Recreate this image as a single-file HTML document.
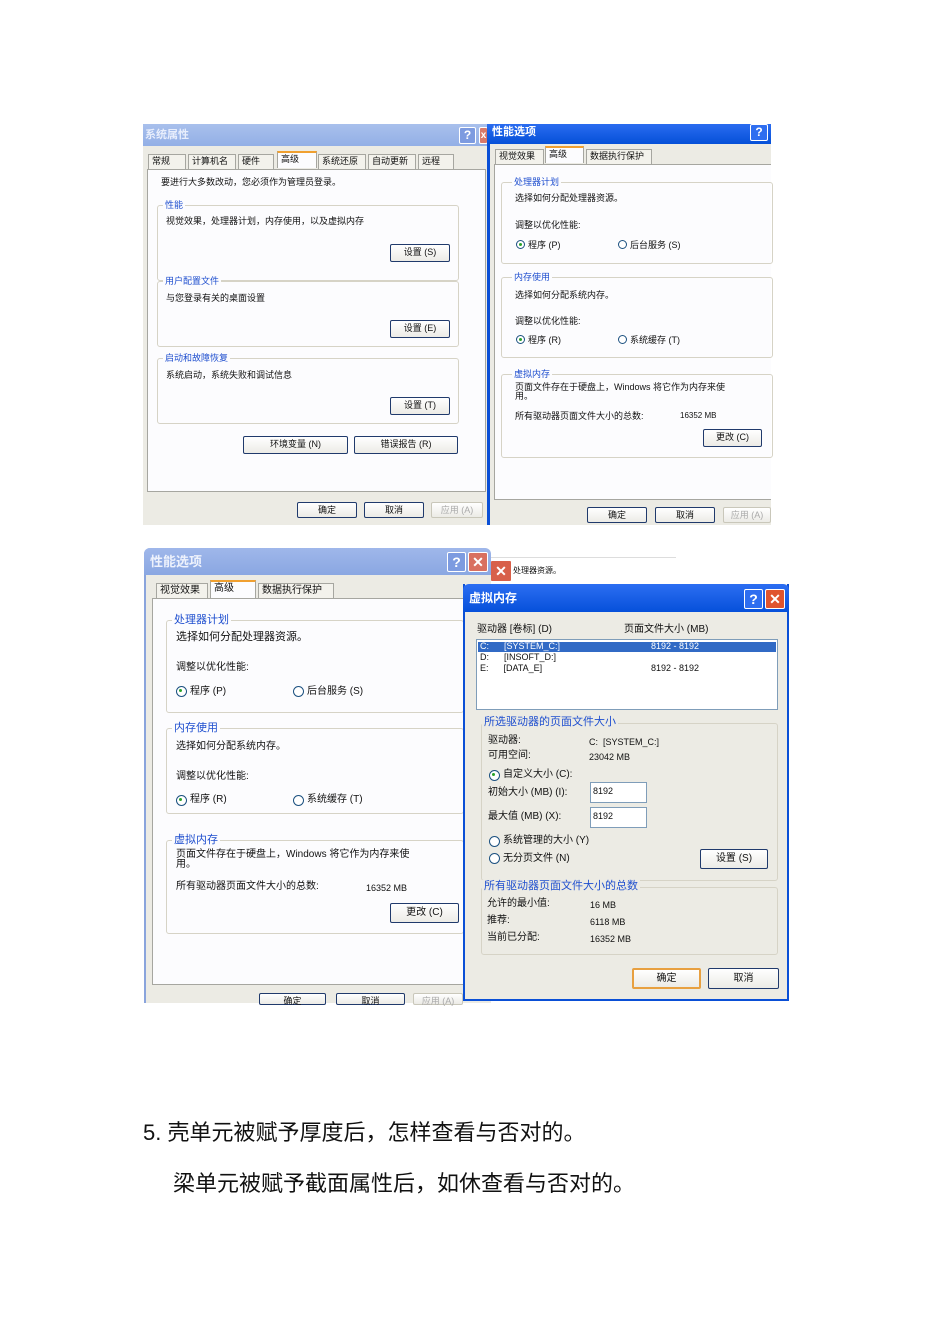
<!DOCTYPE html>
<html><head><meta charset="utf-8"><style>
*{margin:0;padding:0;box-sizing:border-box}
body{width:950px;height:1344px;background:#fff;position:relative;overflow:hidden;font-family:"Liberation Sans","Noto Sans CJK SC",sans-serif;color:#111}
div,span{position:absolute}
.t{white-space:nowrap;font-size:10px;line-height:12px}
.s{font-size:9px}
.lg{color:#1f4fcf;background:inherit;padding:0 2px}
.btn{border:1px solid #203a6c;border-radius:2px;background:linear-gradient(#fff,#ecebe6);font-size:9px;text-align:center;line-height:15px;white-space:nowrap}
.dis{border-color:#c9c7ba;color:#aaa}
.grp{border:1px solid #d6d3c6;border-radius:3px}
.rad{width:9px;height:9px;border:1px solid #1c5180;border-radius:50%;background:#fff}
.rad.on:after{content:"";position:absolute;left:2px;top:2px;width:3px;height:3px;border-radius:50%;background:#2aa32a}
.tab{border:1px solid #a6a6a0;border-bottom:none;background:#f3f2ec;font-size:9px;line-height:13px;padding-left:3px;white-space:nowrap}
.tab.a{background:#fcfcfe;border-top:2px solid #f0a030;height:17px!important}
.tb{color:#fff;font-weight:bold;font-size:11px}
.hb{border:1px solid #fff;border-radius:2px;color:#fff;font-weight:bold;text-align:center}
</style></head><body>

<div style="left:143px;top:124px;width:345px;height:401px;background:#ecebe4"></div>
<div style="left:143px;top:124px;width:345px;height:22px;background:linear-gradient(#a9c0ec,#93afe6)"></div>
<div class="t tb" style="left:145px;top:129px;color:#e8eefc">系统属性</div>
<div class="hb" style="left:459px;top:127px;width:17px;height:17px;background:#7d9be0;font-size:12px;line-height:15px">?</div>
<div class="hb" style="left:479px;top:127px;width:9px;height:17px;background:#d97a6a;font-size:10px;line-height:15px">x</div>
<div class="tab" style="left:148px;top:154px;width:38px;height:15px">常规</div>
<div class="tab" style="left:188px;top:154px;width:48px;height:15px">计算机名</div>
<div class="tab" style="left:238px;top:154px;width:36px;height:15px">硬件</div>
<div class="tab a" style="left:277px;top:151px;width:40px">高级</div>
<div class="tab" style="left:318px;top:154px;width:48px;height:15px">系统还原</div>
<div class="tab" style="left:368px;top:154px;width:48px;height:15px">自动更新</div>
<div class="tab" style="left:418px;top:154px;width:36px;height:15px">远程</div>
<div style="left:147px;top:169px;width:339px;height:323px;background:#fcfcfe;border:1px solid #a6a6a0"></div>
<div class="t s" style="left:161px;top:176px">要进行大多数改动，您必须作为管理员登录。</div>
<div class="grp" style="left:157px;top:205px;width:302px;height:76px"></div>
<div class="t s lg" style="left:163px;top:199px;background:#fcfcfe">性能</div>
<div class="t s" style="left:166px;top:215px">视觉效果，处理器计划，内存使用，以及虚拟内存</div>
<div class="btn" style="left:390px;top:244px;width:60px;height:18px">设置 (S)</div>
<div class="grp" style="left:157px;top:281px;width:302px;height:66px"></div>
<div class="t s lg" style="left:163px;top:275px;background:#fcfcfe">用户配置文件</div>
<div class="t s" style="left:166px;top:292px">与您登录有关的桌面设置</div>
<div class="btn" style="left:390px;top:320px;width:60px;height:18px">设置 (E)</div>
<div class="grp" style="left:157px;top:358px;width:302px;height:66px"></div>
<div class="t s lg" style="left:163px;top:352px;background:#fcfcfe">启动和故障恢复</div>
<div class="t s" style="left:166px;top:369px">系统启动，系统失败和调试信息</div>
<div class="btn" style="left:390px;top:397px;width:60px;height:18px">设置 (T)</div>
<div class="btn" style="left:243px;top:436px;width:105px;height:18px">环境变量 (N)</div>
<div class="btn" style="left:354px;top:436px;width:104px;height:18px">错误报告 (R)</div>
<div class="btn" style="left:297px;top:502px;width:60px;height:16px">确定</div>
<div class="btn" style="left:364px;top:502px;width:60px;height:16px">取消</div>
<div class="btn dis" style="left:431px;top:502px;width:52px;height:16px">应用 (A)</div>

<div style="left:487px;top:124px;width:284px;height:401px;background:#ecebe4;border-left:3px solid #0a4fd6"></div>
<div style="left:487px;top:124px;width:284px;height:20px;background:linear-gradient(#2a6cf0,#0550d8)"></div>
<div class="t tb" style="left:492px;top:126px">性能选项</div>
<div class="hb" style="left:750px;top:124px;width:18px;height:17px;background:#2e6ef0;font-size:12px;line-height:15px">?</div>
<div class="tab" style="left:495px;top:149px;width:49px;height:15px">视觉效果</div>
<div class="tab a" style="left:545px;top:146px;width:39px">高级</div>
<div class="tab" style="left:586px;top:149px;width:66px;height:15px">数据执行保护</div>
<div style="left:494px;top:164px;width:277px;height:336px;background:#fcfcfe;border:1px solid #a6a6a0;border-right:none"></div>
<div class="grp" style="left:501px;top:182px;width:272px;height:82px"></div>
<div class="t s lg" style="left:512px;top:176px;background:#fcfcfe">处理器计划</div>
<div class="t s" style="left:515px;top:192px">选择如何分配处理器资源。</div>
<div class="t s" style="left:515px;top:219px">调整以优化性能:</div>
<div class="rad on" style="left:516px;top:240px"></div><div class="t s" style="left:528px;top:239px">程序 (P)</div>
<div class="rad" style="left:618px;top:240px"></div><div class="t s" style="left:630px;top:239px">后台服务 (S)</div>
<div class="grp" style="left:501px;top:277px;width:272px;height:81px"></div>
<div class="t s lg" style="left:512px;top:271px;background:#fcfcfe">内存使用</div>
<div class="t s" style="left:515px;top:289px">选择如何分配系统内存。</div>
<div class="t s" style="left:515px;top:315px">调整以优化性能:</div>
<div class="rad on" style="left:516px;top:335px"></div><div class="t s" style="left:528px;top:334px">程序 (R)</div>
<div class="rad" style="left:618px;top:335px"></div><div class="t s" style="left:630px;top:334px">系统缓存 (T)</div>
<div class="grp" style="left:501px;top:374px;width:272px;height:84px"></div>
<div class="t s lg" style="left:512px;top:368px;background:#fcfcfe">虚拟内存</div>
<div class="t s" style="left:515px;top:383px;line-height:9px">页面文件存在于硬盘上，Windows 将它作为内存来使<br>用。</div>
<div class="t s" style="left:515px;top:410px">所有驱动器页面文件大小的总数:</div>
<div class="t s" style="left:680px;top:410px;font-size:8px">16352 MB</div>
<div class="btn" style="left:703px;top:429px;width:59px;height:18px">更改 (C)</div>
<div class="btn" style="left:587px;top:507px;width:60px;height:16px">确定</div>
<div class="btn" style="left:655px;top:507px;width:60px;height:16px">取消</div>
<div class="btn dis" style="left:723px;top:507px;width:48px;height:16px">应用 (A)</div>

<div style="left:490px;top:557px;width:186px;height:26px;background:#fff;border-top:1px solid #ddd"></div>
<div class="t" style="left:513px;top:565px;font-size:8px">处理器资源。</div>
<div class="hb" style="left:490px;top:560px;width:22px;height:22px;background:#d8604a;font-size:14px;line-height:20px">✕</div>

<div style="left:144px;top:548px;width:347px;height:455px;background:#ecebe4;border-left:2px solid #8aa4dc;border-radius:6px 6px 0 0"></div>
<div style="left:144px;top:548px;width:347px;height:27px;background:linear-gradient(#9fb7ea,#8aa7e2);border-radius:6px 6px 0 0"></div>
<div class="t tb" style="left:150px;top:554px;font-size:13px;line-height:16px;color:#eef2fc">性能选项</div>
<div class="hb" style="left:447px;top:552px;width:19px;height:20px;background:#7d9be0;font-size:14px;line-height:18px">?</div>
<div class="hb" style="left:468px;top:552px;width:20px;height:20px;background:#d97060;font-size:14px;line-height:18px">✕</div>
<div class="tab" style="left:156px;top:583px;width:52px;height:16px;font-size:10px">视觉效果</div>
<div class="tab a" style="left:210px;top:580px;width:46px;height:19px!important;font-size:10px">高级</div>
<div class="tab" style="left:258px;top:583px;width:76px;height:16px;font-size:10px">数据执行保护</div>
<div style="left:152px;top:598px;width:312px;height:387px;background:#fcfcfe;border:1px solid #a6a6a0"></div>
<div class="grp" style="left:166px;top:620px;width:298px;height:93px"></div>
<div class="t lg" style="left:172px;top:614px;background:#fcfcfe;font-size:11px">处理器计划</div>
<div class="t" style="left:176px;top:631px;font-size:11px">选择如何分配处理器资源。</div>
<div class="t" style="left:176px;top:662px">调整以优化性能:</div>
<div class="rad on" style="left:176px;top:686px;width:11px;height:11px"></div><div class="t" style="left:190px;top:686px">程序 (P)</div>
<div class="rad" style="left:293px;top:686px;width:11px;height:11px"></div><div class="t" style="left:307px;top:686px">后台服务 (S)</div>
<div class="grp" style="left:166px;top:728px;width:298px;height:86px"></div>
<div class="t lg" style="left:172px;top:722px;background:#fcfcfe;font-size:11px">内存使用</div>
<div class="t" style="left:176px;top:741px">选择如何分配系统内存。</div>
<div class="t" style="left:176px;top:771px">调整以优化性能:</div>
<div class="rad on" style="left:176px;top:795px;width:11px;height:11px"></div><div class="t" style="left:190px;top:794px">程序 (R)</div>
<div class="rad" style="left:293px;top:795px;width:11px;height:11px"></div><div class="t" style="left:307px;top:794px">系统缓存 (T)</div>
<div class="grp" style="left:166px;top:840px;width:298px;height:94px"></div>
<div class="t lg" style="left:172px;top:834px;background:#fcfcfe;font-size:11px">虚拟内存</div>
<div class="t" style="left:176px;top:850px;line-height:10px">页面文件存在于硬盘上，Windows 将它作为内存来使<br>用。</div>
<div class="t" style="left:176px;top:881px">所有驱动器页面文件大小的总数:</div>
<div class="t s" style="left:366px;top:882px">16352 MB</div>
<div class="btn" style="left:390px;top:903px;width:69px;height:20px;font-size:10px;line-height:18px">更改 (C)</div>
<div class="btn" style="left:259px;top:993px;width:67px;height:12px;line-height:14px">确定</div>
<div class="btn" style="left:336px;top:993px;width:69px;height:12px;line-height:14px">取消</div>
<div class="btn dis" style="left:413px;top:993px;width:50px;height:12px;line-height:14px">应用 (A)</div>

<div style="left:463px;top:584px;width:326px;height:417px;background:#ecebe4;border:2px solid #0a4fd6;border-top:none"></div>
<div style="left:463px;top:584px;width:326px;height:28px;background:linear-gradient(#2c6ef2,#0650da);border-radius:6px 6px 0 0"></div>
<div class="t tb" style="left:469px;top:591px;font-size:12px;line-height:14px">虚拟内存</div>
<div class="hb" style="left:744px;top:589px;width:19px;height:20px;background:#2e6ef0;font-size:14px;line-height:18px">?</div>
<div class="hb" style="left:765px;top:589px;width:20px;height:20px;background:#e0542e;font-size:14px;line-height:18px">✕</div>
<div class="t" style="left:477px;top:624px">驱动器 [卷标] (D)</div>
<div class="t" style="left:624px;top:624px">页面文件大小 (MB)</div>
<div style="left:476px;top:639px;width:302px;height:71px;background:#fff;border:1px solid #7f9db9"></div>
<div style="left:478px;top:642px;width:298px;height:10px;background:#316ac5"></div>
<div class="t s" style="left:480px;top:641px;color:#fff;line-height:11px">C:&nbsp;&nbsp;&nbsp;&nbsp;&nbsp;&nbsp;[SYSTEM_C:]</div>
<div class="t s" style="left:651px;top:641px;color:#fff;line-height:11px">8192 - 8192</div>
<div class="t s" style="left:480px;top:652px;line-height:11px">D:&nbsp;&nbsp;&nbsp;&nbsp;&nbsp;&nbsp;[INSOFT_D:]</div>
<div class="t s" style="left:480px;top:663px;line-height:11px">E:&nbsp;&nbsp;&nbsp;&nbsp;&nbsp;&nbsp;[DATA_E]</div>
<div class="t s" style="left:651px;top:663px;line-height:11px">8192 - 8192</div>
<div class="grp" style="left:481px;top:723px;width:297px;height:158px"></div>
<div class="t lg" style="left:482px;top:716px;background:#ecebe4;font-size:11px">所选驱动器的页面文件大小</div>
<div class="t" style="left:488px;top:735px">驱动器:</div>
<div class="t s" style="left:589px;top:736px">C:&nbsp;&nbsp;[SYSTEM_C:]</div>
<div class="t" style="left:488px;top:750px">可用空间:</div>
<div class="t s" style="left:589px;top:751px">23042 MB</div>
<div class="rad on" style="left:489px;top:770px;width:11px;height:11px"></div><div class="t" style="left:503px;top:769px">自定义大小 (C):</div>
<div class="t" style="left:488px;top:787px">初始大小 (MB) (I):</div>
<div style="left:590px;top:782px;width:57px;height:21px;background:#fff;border:1px solid #7f9db9"></div>
<div class="t s" style="left:593px;top:785px">8192</div>
<div class="t" style="left:488px;top:811px">最大值 (MB) (X):</div>
<div style="left:590px;top:807px;width:57px;height:21px;background:#fff;border:1px solid #7f9db9"></div>
<div class="t s" style="left:593px;top:810px">8192</div>
<div class="rad" style="left:489px;top:836px;width:11px;height:11px"></div><div class="t" style="left:503px;top:835px">系统管理的大小 (Y)</div>
<div class="rad" style="left:489px;top:853px;width:11px;height:11px"></div><div class="t" style="left:503px;top:853px">无分页文件 (N)</div>
<div class="btn" style="left:700px;top:849px;width:68px;height:20px;font-size:10px;line-height:18px">设置 (S)</div>
<div class="grp" style="left:481px;top:887px;width:297px;height:68px"></div>
<div class="t lg" style="left:482px;top:880px;background:#ecebe4;font-size:11px">所有驱动器页面文件大小的总数</div>
<div class="t" style="left:487px;top:898px">允许的最小值:</div>
<div class="t s" style="left:590px;top:899px">16 MB</div>
<div class="t" style="left:487px;top:915px">推荐:</div>
<div class="t s" style="left:590px;top:916px">6118 MB</div>
<div class="t" style="left:487px;top:932px">当前已分配:</div>
<div class="t s" style="left:590px;top:933px">16352 MB</div>
<div class="btn" style="left:632px;top:968px;width:69px;height:21px;border:2px solid #e8a040;font-size:10px;line-height:17px">确定</div>
<div class="btn" style="left:708px;top:968px;width:71px;height:21px;font-size:10px;line-height:19px">取消</div>

<div class="t" style="left:143px;top:1119px;font-size:22px;line-height:28px">5. 壳单元被赋予厚度后，怎样查看与否对的。</div>
<div class="t" style="left:173px;top:1170px;font-size:22px;line-height:28px">梁单元被赋予截面属性后，如休查看与否对的。</div>
</body></html>
